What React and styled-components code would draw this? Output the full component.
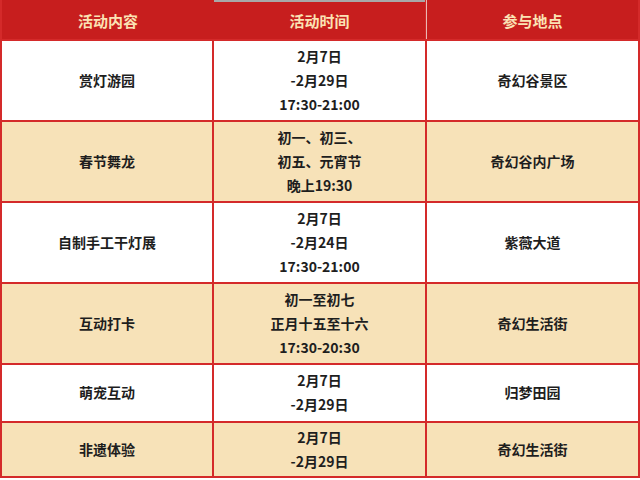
import React from "react";
import styled, { createGlobalStyle } from "styled-components";

const Global = createGlobalStyle`
  html, body { margin: 0; padding: 0; background: #ffffff; }
  body { font-family: "Noto Sans CJK SC", "Noto Sans", sans-serif; }
`;

const Table = styled.div`
  width: 640px;
  box-sizing: border-box;
  display: grid;
  grid-template-columns: 210px 211px 211px;
  grid-template-rows: 39px 79px 79px 79px 79px 56px 53px;
  gap: 2px;
  padding: 0 2px 2px 2px;
  background: #d42a2a;
`;

const HeaderCell = styled.div`
  background: #c71e1e;
  color: #fbe2b4;
  font-size: 15px;
  font-weight: 700;
  display: flex;
  align-items: center;
  justify-content: center;
  padding-top: 2px;
  margin-right: ${(p) => (p.$joinRight ? "-2px" : "0")};
  box-shadow: ${(p) =>
    [
      p.$topline ? "inset 0 2px 0 #a8a8a8" : null,
      p.$divider ? "-1px 0 0 #e9b9b4" : null,
    ]
      .filter(Boolean)
      .join(", ") || "none"};
`;

const Cell = styled.div`
  background: ${(p) => (p.$alt ? "#f7e2b8" : "#ffffff")};
  color: #1e1e1e;
  font-size: 14px;
  font-weight: 700;
  line-height: 24px;
  display: flex;
  flex-direction: column;
  align-items: center;
  justify-content: center;
  text-align: center;
  padding-bottom: 2px;
`;

const rows = [
  { name: "赏灯游园", time: ["2月7日", "-2月29日", "17:30-21:00"], place: "奇幻谷景区" },
  { name: "春节舞龙", time: ["初一、初三、", "初五、元宵节", "晚上19:30"], place: "奇幻谷内广场" },
  { name: "自制手工干灯展", time: ["2月7日", "-2月24日", "17:30-21:00"], place: "紫薇大道" },
  { name: "互动打卡", time: ["初一至初七", "正月十五至十六", "17:30-20:30"], place: "奇幻生活街" },
  { name: "萌宠互动", time: ["2月7日", "-2月29日"], place: "归梦田园" },
  { name: "非遗体验", time: ["2月7日", "-2月29日"], place: "奇幻生活街" },
];

export default function App() {
  return (
    <>
      <Global />
      <Table>
        <HeaderCell $joinRight>活动内容</HeaderCell>
        <HeaderCell $topline>活动时间</HeaderCell>
        <HeaderCell $divider>参与地点</HeaderCell>
        {rows.map((r, i) => (
          <React.Fragment key={i}>
            <Cell $alt={i % 2 === 1}>{r.name}</Cell>
            <Cell $alt={i % 2 === 1}>
              {r.time.map((t, j) => (
                <span key={j}>{t}</span>
              ))}
            </Cell>
            <Cell $alt={i % 2 === 1}>{r.place}</Cell>
          </React.Fragment>
        ))}
      </Table>
    </>
  );
}
